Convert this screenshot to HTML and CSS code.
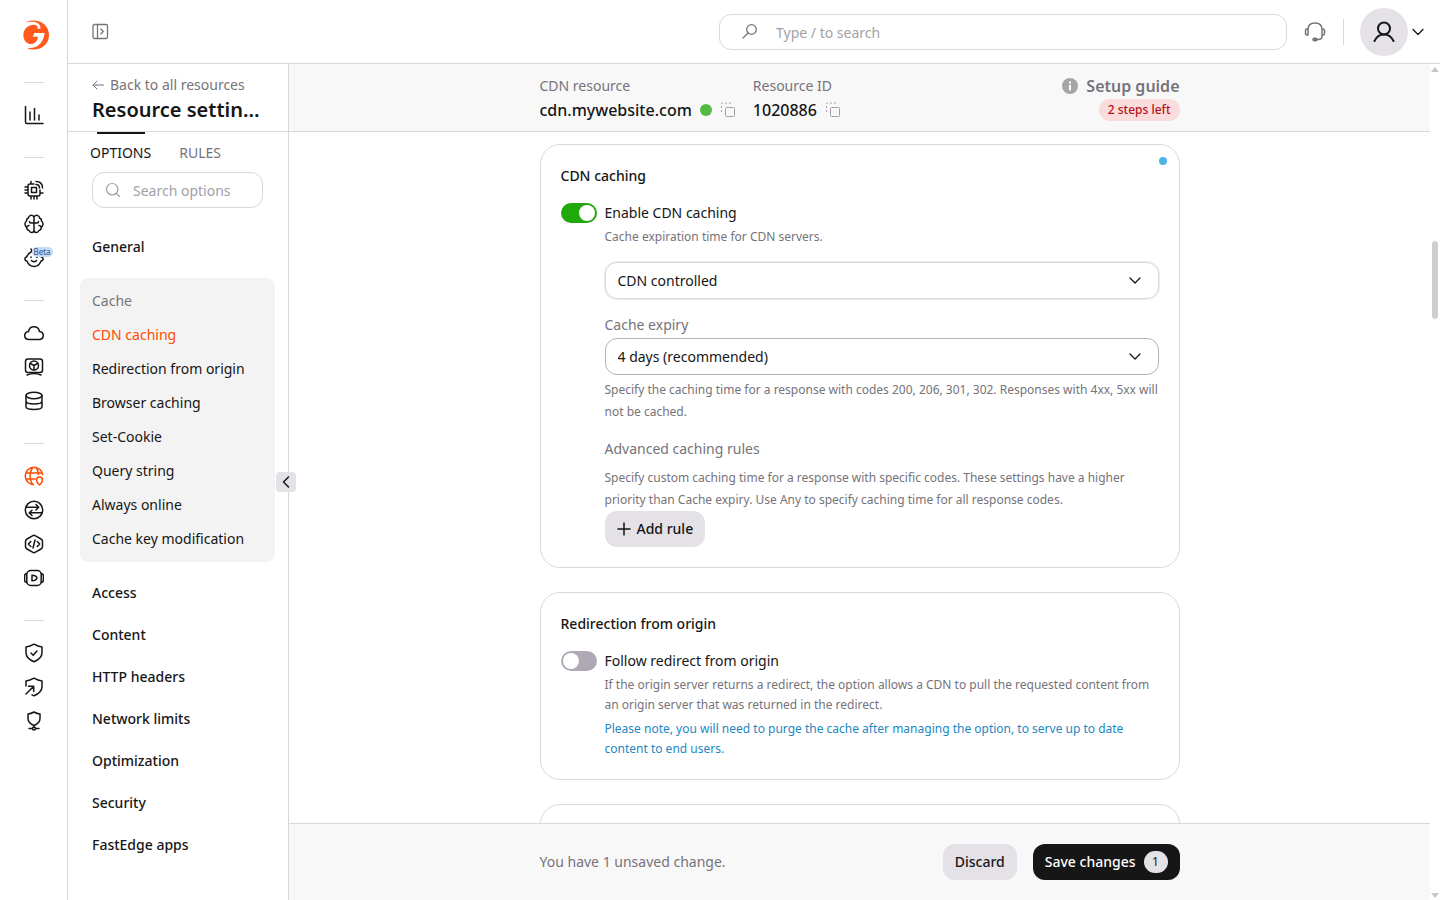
FILE: index.html
```html
<!DOCTYPE html>
<html lang="en">
<head>
<meta charset="utf-8">
<meta name="viewport" content="width=device-width, initial-scale=1">
<title>Resource settings</title>
<link rel="stylesheet" href="styles.css">
</head>
<body>
<div class="app">
  <nav class="rail" aria-label="Products">
    <a class="logo" href="#" aria-label="Home">
      <svg width="28" height="32" viewBox="66 57 84 96"><path fill="#ff5a1c" d="M76 67C110 51 147 70 147 105C147 140 110 159 79 143C110 148 130 130 134 99H103L98 110H114C112 123 104 131 94 132C78 132 70 119 70 104C71 86 86 73 103 74C111 75 114 79 112 86L121 86C124 69 104 62 76 67Z"/></svg>
    </a>
    <div class="rail-group">
      <a href="#" aria-label="Statistics"><svg class="ico" viewBox="0 0 20 20"><path d="M1.500 1.500V17q0 1.500 1.500 1.500H19M6 7v8M10.500 3.500V15M15 10v5"/></svg></a>
    </div>
    <div class="rail-group">
      <a href="#" aria-label="GPU cloud"><svg class="ico" viewBox="0 0 20 20"><path d="M10 4H6Q4 4 4 6v8q0 2 2 2h8q2 0 2-2v-4M7.500 7.500h5v5h-5zM7 1.500V4M7 16v3M10 16v3M13 16v3M1 7h3M1 10h3M1 13h3M16 13h3M12 4.500q3.500 0 3.500 3.500M12 1.500q6.500 0 6.500 6.500"/></svg></a>
      <a href="#" aria-label="AI inference"><svg class="ico" viewBox="0 0 20 20"><path d="M10 3Q8.500.800 6.500 1.500 4.500 2 4.500 4 2.500 4.500 2.500 7 .700 8.500 1 10.500q.300 2 1.800 2.700Q2.500 16 5 16.500 6 18.800 8 18.500q2-.300 2-2.500ZM10 3q1.500-2.200 3.500-1.500 2 .500 2 2.500 2 .500 2 3 1.800 1.500 1.500 3.500-.300 2-1.800 2.700.300 2.800-2.200 3.300-1 2.300-3 2-2-.300-2-2.500M10 9H7Q5.500 9 5.500 7.500M10 9h3q1.500 0 1.500-1.500M2.800 13Q3.500 11.500 5 11.500M17.200 13q-.700-1.500-2.200-1.500"/></svg></a>
      <a href="#" aria-label="AI assistant"><svg class="ico" viewBox="0 0 20 20"><path d="M7 4Q3.500 6 2.700 9 .500 9.500 1 11.500q.300 1.500 2 1.500 2 5.500 7 5.500t7-5.500q1.700 0 2-1.500.500-2-1.700-2.500-.800-3-3.300-4.500M7 4q1.500-1.500 0-3M7.500 12.500q2.500 2.500 5 0M7 9v.500M13 9v.500"/></svg><span class="beta">Beta</span></a>
    </div>
    <div class="rail-group">
      <a href="#" aria-label="Cloud"><svg class="ico" viewBox="0 0 20 20"><path d="M5 16.500Q.800 16.300.700 12.500.800 9 4.500 8.500 5.500 3.800 10 3.800t5.500 4.700q3.700.500 3.800 4-.100 3.800-4.300 4z"/></svg></a>
      <a href="#" aria-label="Virtual machines"><svg class="ico" viewBox="0 0 20 20"><rect x="1.500" y="2" width="17" height="13.500" rx="2.500"/><circle cx="10" cy="8.500" r="4.500"/><path d="M6.500 6.500 10 8.500l3.500-2M10 8.500v4M3 18q7-3 14 0"/></svg></a>
      <a href="#" aria-label="Storage"><svg class="ico" viewBox="0 0 20 20"><ellipse cx="10" cy="4.500" rx="8" ry="3.200"/><path d="M2 4.500v11c0 4 16 4 16 0v-11M2 10c0 4 16 4 16 0"/></svg></a>
    </div>
    <div class="rail-group">
      <a class="current" href="#" aria-label="CDN" aria-current="page"><svg class="ico" viewBox="0 0 20 20"><path d="M9.500 18.500Q4 18 2 13.500 0 8 3.500 4 7 .800 11.500 1.500q6 1 7.200 7M2 7h16M2 13h9M8.500 1.500Q3.500 10 8.500 18.500M12 1.500q2.500 3.500 2.500 7M15.500 11q3 0 3 3 0 2.500-3 5-3-2.500-3-5 0-3 3-3Z"/></svg></a>
      <a href="#" aria-label="FastEdge network"><svg class="ico" viewBox="0 0 20 20"><circle cx="10" cy="10" r="8.700"/><path d="M2 7.200h12.500M12 4.500l2.700 2.700L12 10M18 12.800H5.500M8 10.200l-2.700 2.700L8 15.500"/></svg></a>
      <a href="#" aria-label="FastEdge apps"><svg class="ico" viewBox="0 0 20 20"><path d="M8.500 1.800q1.500-.900 3 0l5.500 3.200q1.500.900 1.500 2.500v5q0 1.600-1.500 2.500l-5.500 3.200q-1.500.900-3 0L3 15q-1.500-.900-1.500-2.500v-5Q1.500 5.900 3 5zM6.800 7.500 4.300 10l2.500 2.500M13.200 7.500l2.500 2.500-2.500 2.500M11 6 9 14"/></svg></a>
      <a href="#" aria-label="Streaming"><svg class="ico" viewBox="0 0 20 20"><rect x="2.800" y="2.500" width="14.400" height="15" rx="4"/><path d="M2.500 5.500Q.600 6 .600 8v4q0 2 1.900 2.500M17.500 5.500q1.900.500 1.900 2.500v4q0 2-1.900 2.500M8 7.200v5.600q4 0 5-2.800-1-2.800-5-2.800z"/></svg></a>
    </div>
    <div class="rail-group">
      <a href="#" aria-label="WAAP"><svg class="ico" viewBox="0 0 20 20"><path d="M10 1.200Q14 3.500 18 4v5.500q0 6-8 9.300-8-3.300-8-9.300V4q4-.500 8-2.800ZM7 10l2.200 2.200L13 8"/></svg></a>
      <a href="#" aria-label="DDoS protection"><svg class="ico" viewBox="0 0 20 20"><path d="M2 9V4q4-.500 8-2.800Q14 3.500 18 4v5.500q0 6-8 9.300l-2-1M2 17l7.500-7.500M4.500 9.300h5.200v5.200"/></svg></a>
      <a href="#" aria-label="DNS"><svg class="ico" viewBox="0 0 20 20"><path d="M10 1q3 1.800 6 2v4.500q0 4.500-6 7-6-2.500-6-7V3q3-.200 6-2ZM10 14.500v2M5 17.500h3M12 17.500h3"/><circle cx="10" cy="17.500" r="1.500"/></svg></a>
    </div>
  </nav>

  <header class="topbar">
    <button class="plain" type="button" aria-label="Expand navigation"><svg class="ico grey" width="17" height="17" viewBox="0 0 17 17"><rect x="1" y="1.500" width="14.500" height="14" rx="1.500"/><path d="M5.500 1.500v14M8.800 6l2.500 2.500L8.800 11"/></svg></button>
    <label class="global-search">
      <svg class="ico grey" width="18" height="18" viewBox="0 0 18 18"><circle cx="10.500" cy="6.500" r="4.800"/><path d="m7 10-5 5"/></svg>
      <input type="search" aria-label="Search" placeholder="Type / to search">
    </label>
    <button class="plain support" type="button" aria-label="Support"><svg class="ico" width="22" height="22" viewBox="0 0 22 22"><path d="M4 8.500Q4 2 11 2t7 6.500M4 8H2.800Q1.500 8 1.500 9.500v3Q1.500 14 2.800 14H4zM18 8h1.200q1.300 0 1.300 1.500v3q0 1.500-1.300 1.500H18zM18 14v1.500q0 3-4 3h-2"/><rect x="9" y="17.200" width="4" height="2.600" rx="1.300" fill="currentColor"/></svg></button>
    <span class="bar"></span>
    <button class="plain account" type="button" aria-label="Account"><span class="avatar"><svg class="ico" width="24" height="24" viewBox="0 0 24 24"><circle cx="12" cy="8.500" r="6"/><path d="M2.500 21Q5.500 14.500 12 14.500T21.500 21"/></svg></span><svg class="ico chevron" width="12" height="12" viewBox="0 0 12 12"><path d="m1 3.500 5 5 5-5"/></svg></button>
  </header>

  <aside class="sidebar">
    <div class="side-head">
      <a class="back" href="#"><svg class="ico" width="12" height="12" viewBox="0 0 12 12"><path d="M11.500 6H1M5 2 1 6l4 4"/></svg>Back to all resources</a>
      <h1>Resource settings</h1>
    </div>
    <div class="tabs" role="tablist">
      <button class="tab active" type="button" role="tab" aria-selected="true">OPTIONS</button>
      <button class="tab" type="button" role="tab" aria-selected="false">RULES</button>
    </div>
    <label class="side-search">
      <svg class="ico" width="16" height="16" viewBox="0 0 16 16"><circle cx="7.200" cy="7.200" r="5.700"/><path d="m11.500 11.500 3 3"/></svg>
      <input type="search" aria-label="Search options" placeholder="Search options">
    </label>
    <nav class="side-nav" aria-label="Options">
      <a class="section" href="#">General</a>
      <div class="section-open">
        <span class="caption">Cache</span>
        <a class="selected" href="#">CDN caching</a>
        <a href="#">Redirection from origin</a>
        <a href="#">Browser caching</a>
        <a href="#">Set-Cookie</a>
        <a href="#">Query string</a>
        <a href="#">Always online</a>
        <a href="#">Cache key modification</a>
      </div>
      <a class="section" href="#">Access</a>
      <a class="section" href="#">Content</a>
      <a class="section" href="#">HTTP headers</a>
      <a class="section" href="#">Network limits</a>
      <a class="section" href="#">Optimization</a>
      <a class="section" href="#">Security</a>
      <a class="section" href="#">FastEdge apps</a>
    </nav>
    <button class="collapse" type="button" aria-label="Collapse sidebar"><svg class="ico" width="12" height="12" viewBox="0 0 12 12"><path d="M8.500 1 3.500 6l5 5"/></svg></button>
  </aside>

  <main class="content">
    <header class="resource-bar">
      <div class="column resource-row">
        <div class="fact">
          <span class="fact-label">CDN resource</span>
          <span class="fact-value">cdn.mywebsite.com <i class="status"></i>
            <button class="plain" type="button" aria-label="Copy resource"><svg class="copy" viewBox="0 0 16 16"><rect x="5.500" y="5.500" width="9" height="9" rx="1"/><path stroke-dasharray="2 2" d="M1.500 10V2q0-1 1-1H11v2"/></svg></button></span>
        </div>
        <div class="fact">
          <span class="fact-label">Resource ID</span>
          <span class="fact-value">1020886
            <button class="plain" type="button" aria-label="Copy resource ID"><svg class="copy" viewBox="0 0 16 16"><rect x="5.500" y="5.500" width="9" height="9" rx="1"/><path stroke-dasharray="2 2" d="M1.500 10V2q0-1 1-1H11v2"/></svg></button></span>
        </div>
        <div class="guide">
          <a class="guide-link" href="#"><svg width="16" height="16" viewBox="0 0 16 16"><circle cx="8" cy="8" r="8" fill="#a6a6a6"/><path fill="#fff" d="M7 3.500h2v2H7zM7 7h2v5.500H7z"/></svg>Setup guide</a>
          <span class="steps">2 steps left</span>
        </div>
      </div>
    </header>

    <div class="scroll">
      <div class="column cards">
        <section class="card">
          <i class="changed"></i>
          <h2>CDN caching</h2>
          <label class="switch"><input type="checkbox" role="switch" checked><span>Enable CDN caching</span></label>
          <div class="details">
            <p class="hint">Cache expiration time for CDN servers.</p>
            <div class="select focused"><select aria-label="Caching mode"><option>CDN controlled</option></select><svg class="ico chevron" width="14" height="14" viewBox="0 0 14 14"><path d="m2 4 5 5 5-5"/></svg></div>
            <label class="field-label" for="expiry">Cache expiry</label>
            <div class="select"><select id="expiry"><option>4 days (recommended)</option></select><svg class="ico chevron" width="14" height="14" viewBox="0 0 14 14"><path d="m2 4 5 5 5-5"/></svg></div>
            <p class="hint roomy">Specify the caching time for a response with codes 200, 206, 301, 302. Responses with 4xx, 5xx will not be cached.</p>
            <h3>Advanced caching rules</h3>
            <p class="hint roomy">Specify custom caching time for a response with specific codes. These settings have a higher priority than Cache expiry. Use Any to specify caching time for all response codes.</p>
            <button class="btn" type="button"><svg class="ico" width="14" height="14" viewBox="0 0 14 14"><path d="M7 1v12M1 7h12"/></svg>Add rule</button>
          </div>
        </section>

        <section class="card">
          <h2>Redirection from origin</h2>
          <label class="switch"><input type="checkbox" role="switch"><span>Follow redirect from origin</span></label>
          <div class="details">
            <p class="hint">If the origin server returns a redirect, the option allows a CDN to pull the requested content from an origin server that was returned in the redirect.</p>
            <p class="hint note">Please note, you will need to purge the cache after managing the option, to serve up to date content to end users.</p>
          </div>
        </section>

        <section class="card next"></section>
      </div>
    </div>

    <footer class="save-bar">
      <div class="column save-row">
        <span class="unsaved">You have 1 unsaved change.</span>
        <button class="btn" type="button">Discard</button>
        <button class="btn primary" type="button">Save changes <span class="count">1</span></button>
      </div>
    </footer>
  </main>

  <div class="scrollbar" aria-hidden="true">
    <svg width="8" height="5" viewBox="0 0 8 5"><path fill="#c9c6cb" d="M4 0 8 5H0z"/></svg>
    <i class="before"></i><i class="thumb"></i><i class="after"></i>
    <svg width="8" height="5" viewBox="0 0 8 5"><path fill="#c9c6cb" d="M0 0h8L4 5z"/></svg>
  </div>
</div>
</body>
</html>
```

FILE: styles.css
```css
:root {
  --ink: #161616;
  --muted: #76737a;
  --faint: #a3a0a7;
  --line: #d9d7db;
  --panel: #f8f8f8;
  --fill: #e4e1e7;
  --accent: #ff4c00;
}

* { box-sizing: border-box; }

body {
  margin: 0;
  background: #fff;
  color: var(--ink);
  font: 14px/20px "Noto Sans", sans-serif;
}

h1, h2, h3, p { margin: 0; }
a { color: inherit; text-decoration: none; }
button, input, select { font: inherit; color: inherit; }

.plain {
  display: flex;
  align-items: center;
  padding: 0;
  border: 0;
  background: none;
}

.ico {
  flex: none;
  fill: none;
  stroke: currentColor;
  stroke-width: 1.5;
  stroke-linecap: round;
  stroke-linejoin: round;
}
.ico.grey { color: var(--muted); stroke-width: 1.3; }
.ico.chevron { stroke-width: 1.3; }

.app {
  display: grid;
  grid-template-columns: 68px 221px minmax(0, 1fr) 10px;
  grid-template-rows: 64px minmax(0, 1fr);
  height: 100vh;
  overflow: hidden;
}

/* Product rail */
.rail {
  grid-row: 1 / 3;
  display: flex;
  flex-direction: column;
  align-items: center;
  border-right: 1px solid var(--line);
}
.logo { padding: 19px 0 26px 4px; }
.logo svg { display: block; }
.rail-group {
  width: 20px;
  padding: 15px 0 25px;
  border-top: 1px solid var(--line);
}
.rail-group:first-of-type { margin-top: 5px; }
.rail-group a {
  position: relative;
  display: flex;
  align-items: center;
  height: 34px;
}
.rail-group .ico { width: 20px; height: 20px; }
.current { color: var(--accent); }
.beta {
  position: absolute;
  left: 8px;
  top: 6px;
  padding: 0 2px;
  border-radius: 5px;
  background: #c5dcf7;
  color: #24548f;
  font-size: 8px;
  line-height: 10px;
}

/* Top bar */
.topbar {
  grid-column: 2 / 5;
  display: flex;
  align-items: center;
  padding: 0 16px 0 24px;
  border-bottom: 1px solid var(--line);
}
.global-search {
  flex: 0 1 568px;
  display: flex;
  align-items: center;
  gap: 17px;
  height: 36px;
  margin-left: auto;
  padding: 0 21px;
  border: 1px solid var(--line);
  border-radius: 12px;
}
.global-search input, .side-search input {
  flex: 1;
  min-width: 0;
  padding: 2px 0 0;
  border: 0;
  outline: 0;
  background: none;
}
::placeholder { color: var(--faint); opacity: 1; }
.support { margin: 0 17px; color: var(--muted); }
.bar { width: 1px; height: 26px; background: var(--line); }
.account { gap: 4px; margin-left: 16px; }
.avatar {
  display: grid;
  place-items: center;
  width: 48px;
  height: 48px;
  border-radius: 50%;
  background: var(--fill);
}
.avatar .ico { stroke-width: 2; }

/* Sidebar */
.sidebar {
  position: relative;
  display: flex;
  flex-direction: column;
  border-right: 1px solid var(--line);
}
.side-head {
  height: 68px;
  padding: 11px 24px 0;
  border-bottom: 1px solid var(--line);
}
.back {
  display: flex;
  align-items: center;
  gap: 6px;
  color: var(--muted);
}
.back .ico { stroke-width: 1; }
.side-head h1 {
  overflow: hidden;
  font-size: 20px;
  font-weight: 600;
  line-height: 30px;
  text-overflow: ellipsis;
  white-space: nowrap;
}
.tabs { display: flex; gap: 28px; padding: 0 22px; }
.tab {
  display: flex;
  flex-direction: column;
  align-items: center;
  gap: 9px;
  height: 40px;
  padding: 0;
  border: 0;
  background: none;
  color: var(--muted);
}
.tab::before { content: ""; width: 48px; height: 2px; margin: 0 -8px; }
.tab.active { color: var(--ink); }
.tab.active::before { background: var(--ink); }
.side-search {
  display: flex;
  align-items: center;
  gap: 12px;
  height: 36px;
  margin: 0 25px 18px 24px;
  padding: 0 12px;
  border: 1px solid var(--line);
  border-radius: 12px;
  color: var(--faint);
}
.side-search .ico { stroke-width: 1.2; }
.side-nav { padding: 0 13px 0 12px; }
.section {
  display: block;
  padding: 0 12px;
  font-weight: 500;
  line-height: 42px;
}
.section-open {
  margin: 10px 0;
  padding: 6px 12px;
  border-radius: 8px;
  background: #f3f3f3;
}
.section-open > * { display: block; line-height: 34px; }
.caption { color: var(--muted); }
.selected { color: var(--accent); }
.collapse {
  position: absolute;
  top: 50%;
  right: -8px;
  display: grid;
  place-items: center;
  width: 20px;
  height: 20px;
  margin-top: -10px;
  padding: 0;
  border: 0;
  border-radius: 4px;
  background: var(--fill);
}

/* Content */
.content {
  display: flex;
  flex-direction: column;
  min-height: 0;
}
.column { width: 100%; max-width: 640px; margin: 0 auto; }
.resource-bar {
  flex: none;
  height: 68px;
  padding-top: 12px;
  border-bottom: 1px solid var(--line);
  background: var(--panel);
}
.resource-row { display: flex; gap: 17px; }
.fact { display: flex; flex-direction: column; }
.fact-label { color: var(--muted); }
.fact-value {
  display: flex;
  align-items: center;
  gap: 8px;
  font-size: 16px;
  font-weight: 500;
  line-height: 28px;
}
.status {
  width: 12px;
  height: 12px;
  border-radius: 50%;
  background: #55b948;
}
.copy {
  width: 16px;
  height: 16px;
  fill: none;
  stroke: var(--faint);
}
.guide {
  display: flex;
  flex-direction: column;
  align-items: flex-end;
  gap: 3px;
  margin-left: auto;
}
.guide-link {
  display: flex;
  align-items: center;
  gap: 8px;
  color: var(--muted);
  font-size: 16px;
  font-weight: 600;
}
.steps {
  padding: 0 9px;
  border-radius: 11px;
  background: #fbdcdc;
  color: #b5121b;
  font-size: 12px;
  font-weight: 500;
  line-height: 22px;
}

.scroll {
  flex: 1;
  min-height: 0;
  padding-top: 12px;
  overflow: hidden;
}
.cards { display: flex; flex-direction: column; gap: 24px; }
.card {
  position: relative;
  padding: 20px;
  border: 1px solid var(--line);
  border-radius: 20px;
}
.card.next { height: 188px; }
.changed {
  position: absolute;
  top: 12px;
  right: 12px;
  width: 8px;
  height: 8px;
  border-radius: 50%;
  background: #4fb4e6;
}
.card h2 {
  margin-bottom: 16px;
  font-size: 14px;
  font-weight: 500;
  line-height: 22px;
}
.switch { display: flex; align-items: center; gap: 8px; }
.switch input {
  appearance: none;
  width: 36px;
  height: 20px;
  margin: 0;
  padding: 2px;
  border-radius: 10px;
  background: #afa9b6;
}
.switch input::before {
  content: "";
  display: block;
  width: 16px;
  height: 16px;
  border-radius: 50%;
  background: #fff;
}
.switch input:checked { background: #21a80d; }
.switch input:checked::before { margin-left: 16px; }
.details {
  display: flex;
  flex-direction: column;
  margin: 4px 0 0 44px;
}
.hint {
  color: var(--muted);
  font-size: 12px;
  line-height: 20px;
}
.hint.roomy { line-height: 22px; }
.hint.note { margin-top: 4px; color: #2288c3; }
.select {
  display: flex;
  align-items: center;
  height: 37px;
  margin-bottom: 4px;
  border: 1px solid #b5b2b8;
  border-radius: 12px;
}
.select select {
  flex: 1;
  height: 100%;
  margin-right: -30px;
  padding: 0 30px 0 12px;
  border: 0;
  outline: 0;
  appearance: none;
  background: none;
}
.select .ico { margin-right: 16px; pointer-events: none; }
.select.focused {
  margin: 15px 0;
  border-color: var(--line);
  box-shadow: 0 0 0 1px #ececee;
}
.field-label { margin-bottom: 2px; line-height: 22px; color: var(--muted); }
.details h3 {
  margin: 16px 0 8px;
  color: var(--muted);
  font-size: 14px;
  font-weight: 400;
  line-height: 20px;
}
.btn {
  display: flex;
  align-items: center;
  align-self: flex-start;
  gap: 6px;
  height: 36px;
  padding: 0 12px;
  border: 0;
  border-radius: 12px;
  background: var(--fill);
  font-weight: 500;
}

/* Save bar */
.save-bar {
  flex: none;
  padding: 20px 0;
  border-top: 1px solid var(--line);
  background: var(--panel);
}
.save-row { display: flex; align-items: center; gap: 16px; }
.unsaved { margin-right: auto; color: var(--muted); }
.btn.primary { gap: 8px; background: var(--ink); color: #fff; }
.count {
  width: 24px;
  border-radius: 11px;
  background: var(--fill);
  color: var(--ink);
  font-size: 12px;
  font-weight: 400;
  line-height: 22px;
}

/* Scroll indicator */
.scrollbar {
  display: flex;
  flex-direction: column;
  align-items: center;
  padding: 3px 0 2px;
}
.before { flex: 169; }
.thumb {
  flex: 78;
  width: 6px;
  border-radius: 3px;
  background: #d0cdd2;
}
.after { flex: 573; }
```
